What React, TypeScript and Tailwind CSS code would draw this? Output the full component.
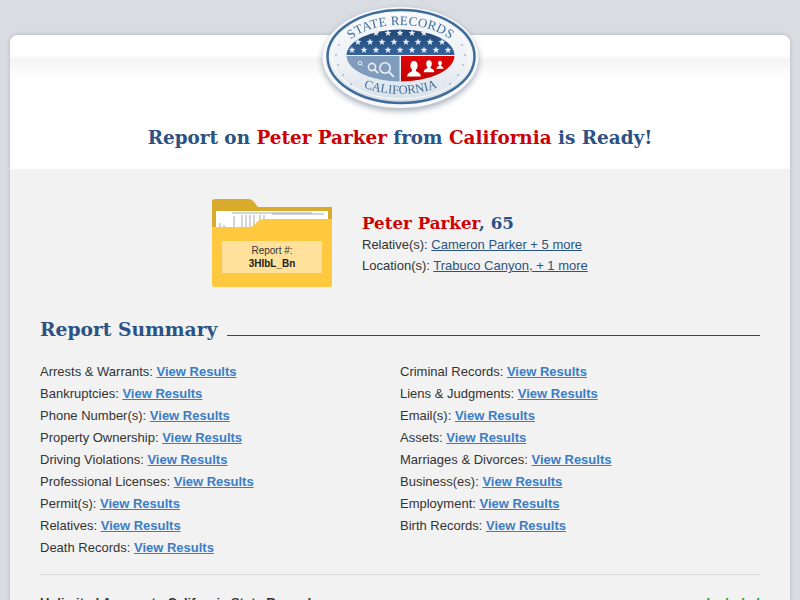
const summaryLeft = [
  'Arrests & Warrants',
  'Bankruptcies',
  'Phone Number(s)',
  'Property Ownership',
  'Driving Violations',
  'Professional Licenses',
  'Permit(s)',
  'Relatives',
  'Death Records',
]

const summaryRight = [
  'Criminal Records',
  'Liens & Judgments',
  'Email(s)',
  'Assets',
  'Marriages & Divorces',
  'Business(es)',
  'Employment',
  'Birth Records',
]

const starRows: [number, number[]][] = [
  [33, [376, 388, 400, 412, 424]],
  [42, [358, 370, 382, 394, 406, 418, 430, 442]],
  [50, [352, 364, 376, 388, 400, 412, 424, 436, 448]],
]

const ringDots: [number, number][] = [
  [339, 45], [336, 55], [338, 65], [343, 75], [351, 84],
  [462, 45], [465, 55], [463, 65], [458, 75], [450, 84],
]

function starPoints(cx: number, cy: number, r: number) {
  const pts: string[] = []
  for (let i = 0; i < 10; i++) {
    const rad = i % 2 === 0 ? r : r * 0.42
    const a = (Math.PI / 5) * i - Math.PI / 2
    pts.push(`${(cx + rad * Math.cos(a)).toFixed(2)},${(cy + rad * Math.sin(a)).toFixed(2)}`)
  }
  return pts.join(' ')
}

function Person({ x, y, s }: { x: number; y: number; s: number }) {
  return (
    <g transform={`translate(${x} ${y}) scale(${s})`} fill="#fff">
      <ellipse cx="0" cy="-6" rx="4" ry="5" />
      <path d="M-2-2 L2-2 L2.5 0.5 C5 1.5 7.5 2.5 7.5 6 L-7.5 6 C-7.5 2.5 -5 1.5 -2.5 0.5 Z" />
    </g>
  )
}

function Lens({ x, y, r }: { x: number; y: number; r: number }) {
  return (
    <g fill="none" stroke="#e9eff5">
      <circle cx={x} cy={y} r={r} strokeWidth={r > 3 ? 1.6 : 1} />
      <path d={`M${x + r * 0.7} ${y + r * 0.7} L${x + r * 1.7} ${y + r * 1.7}`} strokeWidth={r > 3 ? 1.8 : 1} />
    </g>
  )
}

function Seal() {
  return (
    <svg
      className="absolute left-[310px] top-0 drop-shadow-[0_3px_3px_rgba(30,50,80,0.4)]"
      width="180"
      height="115"
      viewBox="310 0 180 115"
    >
      <defs>
        <linearGradient id="face" x1="0" y1="0" x2="0" y2="1">
          <stop offset="0" stopColor="#f6f8fa" />
          <stop offset="0.6" stopColor="#eef1f5" />
          <stop offset="1" stopColor="#d5dee8" />
        </linearGradient>
        <linearGradient id="dome" x1="0" y1="0" x2="0" y2="1">
          <stop offset="0" stopColor="#1f4674" />
          <stop offset="1" stopColor="#35639a" />
        </linearGradient>
        <linearGradient id="red" x1="0" y1="0" x2="0" y2="1">
          <stop offset="0" stopColor="#e00606" />
          <stop offset="1" stopColor="#c00000" />
        </linearGradient>
        <clipPath id="inner">
          <ellipse cx="400.5" cy="55.5" rx="54" ry="26" />
        </clipPath>
        <path id="arcTop" d="M342.5 55 A58 30 0 0 1 458.5 55" />
        <path id="arcBottom" d="M335.5 55 A65 39 0 0 0 465.5 55" />
      </defs>
      <ellipse cx="400.5" cy="57.5" rx="78" ry="50.5" fill="#f7f8fa" />
      <ellipse cx="401" cy="56.5" rx="73.5" ry="46.5" fill="url(#face)" stroke="#3f6c9b" strokeWidth="2.5" />
      <ellipse cx="401" cy="56.5" rx="69" ry="42.5" fill="none" stroke="#fff" strokeWidth="1" />
      <g clipPath="url(#inner)">
        <rect x="346" y="29" width="109" height="26" fill="url(#dome)" />
        <rect x="346" y="56" width="53.5" height="26" fill="#7f9cbd" />
        <rect x="401" y="56" width="54" height="26" fill="url(#red)" />
      </g>
      {starRows.map(([y, xs]) =>
        xs.map((x) => <polygon key={`${x}-${y}`} points={starPoints(x, y, 3.6)} fill="#e8edf3" />),
      )}
      {ringDots.map(([x, y]) => (
        <circle key={`${x}-${y}`} cx={x} cy={y} r="0.7" fill="#5f83a9" />
      ))}
      <Lens x={360} y={63} r={1.8} />
      <Lens x={372} y={67} r={3.6} />
      <Lens x={385} y={68} r={5.2} />
      <Person x={414} y={71} s={0.9} />
      <Person x={429} y={68} s={0.7} />
      <Person x={440} y={66} s={0.47} />
      <text fontFamily="'Liberation Serif', serif" fontSize="13" fill="#3f6c9b" letterSpacing="0.3">
        <textPath href="#arcTop" startOffset="50%" textAnchor="middle">STATE RECORDS</textPath>
      </text>
      <text fontFamily="'Liberation Serif', serif" fontSize="12.5" fill="#3f6c9b">
        <textPath href="#arcBottom" startOffset="50%" textAnchor="middle">CALIFORNIA</textPath>
      </text>
    </svg>
  )
}

function Folder() {
  return (
    <div className="relative w-[120px] h-[88px] shrink-0">
      <svg className="absolute inset-0" width="120" height="88" viewBox="0 0 120 88">
        <path d="M0 3 Q0 0 3 0 L36 0 Q40 0 42 3 L46 8 L120 8 L120 40 L0 40 Z" fill="#d9ab2c" />
        <rect x="4" y="12" width="112" height="20" fill="#fff" />
        <path
          d="M20 14 H100 M22 17 V28 M30 16 V28 M34 16 V28 M38 16 V28 M42 16 V28 M48 16 V26 M52 16 V25 M8 24 V28 M12 26 V28 M60 15 H112"
          stroke="#a9a9a9"
          strokeWidth="1"
          fill="none"
        />
        <path
          d="M0 28 L38 28 Q41 28 43 25 L45 23 Q48 20 52 20 L120 20 L120 86 Q120 88 118 88 L2 88 Q0 88 0 86 Z"
          fill="#ffc93f"
        />
      </svg>
      <div className="absolute left-[10px] top-[42px] w-[100px] h-[32px] bg-[#ffe19b] flex flex-col items-center justify-center text-[10px] leading-[13px] text-[#333]">
        <span>Report #:</span>
        <span className="font-bold text-[#222]">3HIbL_Bn</span>
      </div>
    </div>
  )
}

function SummaryRow({ label }: { label: string }) {
  return (
    <p className="h-[22px] leading-[22px] text-[13px] text-[#333]">
      {label}: <a className="font-bold text-[#3a7dc6] underline">View Results</a>
    </p>
  )
}

export default function App() {
  return (
    <div className="relative h-[600px] overflow-hidden bg-[#d9dde2] pt-[35px] px-[10px] font-['Liberation_Sans',Arial,sans-serif]">
      <div className="rounded-t-[8px] overflow-hidden shadow-[0_0_4px_rgba(60,70,85,0.25)]">
        <header className="h-[134px] bg-white flex flex-col">
          <div className="h-[24px] mt-[20px] bg-gradient-to-b from-white via-[#f4f4f4] via-20% to-white" />
          <h1 className="mt-[45px] text-center text-[18.4px] leading-[28px] font-bold text-[#2b5282] font-['DejaVu_Serif',Georgia,serif]">
            Report on <span className="text-[#cc0000]">Peter Parker</span> from{' '}
            <span className="text-[#cc0000]">California</span> is Ready!
          </h1>
        </header>

        <main className="h-[440px] bg-[#f2f2f2] px-[30px]">
          <section className="flex items-start pt-[30px] pl-[172px] gap-[30px]">
            <Folder />
            <div className="pt-[13px]">
              <h2 className="text-[16.7px] leading-[22px] font-bold text-[#2b5282] font-['DejaVu_Serif',Georgia,serif]">
                <span className="text-[#cc0000]">Peter Parker</span>, 65
              </h2>
              <p className="text-[13px] leading-[21px] text-[#333]">
                Relative(s): <a className="text-[#2b5282] underline">Cameron Parker + 5 more</a>
              </p>
              <p className="text-[13px] leading-[21px] text-[#333]">
                Location(s): <a className="text-[#2b5282] underline">Trabuco Canyon, + 1 more</a>
              </p>
            </div>
          </section>

          <div className="mt-[28px] flex items-end gap-[10px]">
            <h2 className="text-[18.7px] leading-[28px] font-bold text-[#2b5282] font-['DejaVu_Serif',Georgia,serif]">
              Report Summary
            </h2>
            <div className="flex-1 h-px bg-[#2b4a70] mb-[7px]" />
          </div>

          <div className="mt-[18px] grid grid-cols-2">
            <div>
              {summaryLeft.map((label) => <SummaryRow key={label} label={label} />)}
            </div>
            <div>
              {summaryRight.map((label) => <SummaryRow key={label} label={label} />)}
            </div>
          </div>

          <div className="mt-[15px] h-px bg-[#dcdcdc]" />
          <div className="mt-[20px] flex justify-between text-[13px] leading-[16px]">
            <span className="font-bold text-[#333]">Unlimited Access to California State Records</span>
            <span className="font-bold text-[#2a9d3a]">Included</span>
          </div>
        </main>
      </div>
      <Seal />
    </div>
  )
}
